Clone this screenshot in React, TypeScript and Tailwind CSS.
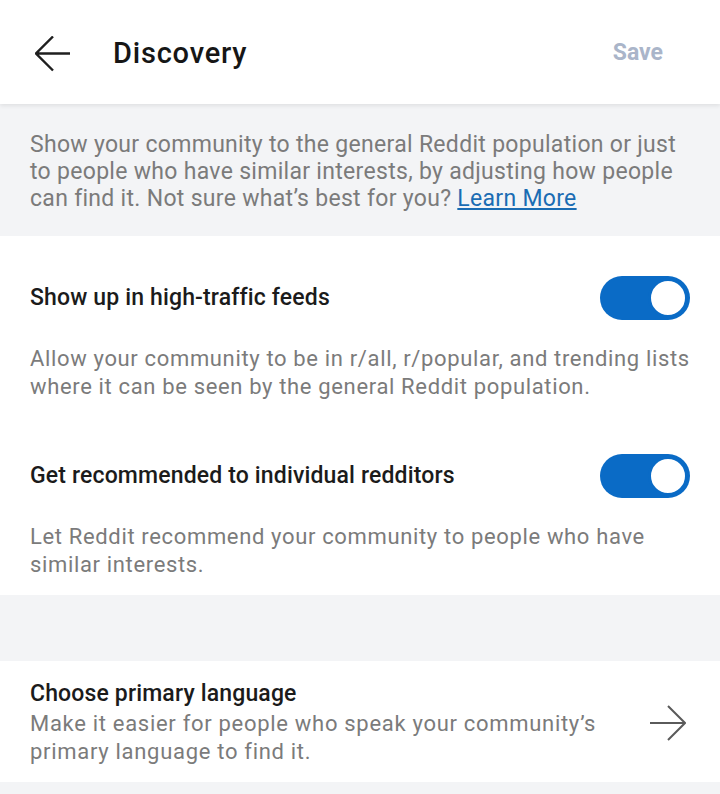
import React from 'react';

const FONT = { fontFamily: 'Roboto, "Noto Sans", sans-serif' };

function Toggle({ on }: { on: boolean }) {
  return (
    <div
      className={`flex h-[44px] w-[90px] shrink-0 items-center rounded-full p-[2px] ${
        on ? 'justify-end bg-[#0a6bc6]' : 'justify-start bg-gray-300'
      }`}
    >
      <div className="h-[40px] w-[40px] rounded-full border-[3px] border-[#0a6bc6] bg-white" />
    </div>
  );
}

const SETTINGS = [
  {
    id: 'feeds',
    title: 'Show up in high-traffic feeds',
    body: 'Allow your community to be in r/all, r/popular, and trending lists where it can be seen by the general Reddit population.',
  },
  {
    id: 'recommended',
    title: 'Get recommended to individual redditors',
    body: 'Let Reddit recommend your community to people who have similar interests.',
  },
];

export default function App() {
  const [enabled, setEnabled] = React.useState<Record<string, boolean>>({ feeds: true, recommended: true });

  return (
    <div className="min-h-screen w-[720px] bg-[#f3f4f6]" style={FONT}>
      <header className="relative z-10 flex h-[104px] items-center bg-white pl-[35px] pr-[57px] pt-[3px] shadow-[0_2px_4px_rgba(0,0,0,0.08)]">
        <svg width="36" height="36" viewBox="0 0 36 36" fill="none" className="shrink-0">
          <path d="M1 17.5H35M18 0.5L1 17.5L18 34.5" stroke="#1f1f1f" strokeWidth="2.4" />
        </svg>
        <h1 className="ml-[42px] text-[29px] font-medium leading-none tracking-[0.8px] text-[#161616]">Discovery</h1>
        <button className="ml-auto text-[23px] font-bold text-[#aab5c9]">Save</button>
      </header>

      <section className="px-[30px] pb-[24px] pt-[27px] text-[23px] leading-[27px] tracking-[0.3px] text-[#7b7b7b]">
        Show your community to the general Reddit population or just to people who have similar interests, by
        adjusting how people can find it. Not sure what’s best for you?{' '}
        <span className="text-[#1a6cb3] underline underline-offset-2">Learn More</span>
      </section>

      <div className="bg-white">
        {SETTINGS.map((s) => (
          <div key={s.id} className="px-[30px] pb-[13px] pt-[40px]">
            <div className="flex items-center justify-between">
              <div className="text-[23px] font-medium tracking-[0.15px] text-[#1b1b1b]">{s.title}</div>
              <button onClick={() => setEnabled((e) => ({ ...e, [s.id]: !e[s.id] }))}>
                <Toggle on={enabled[s.id]} />
              </button>
            </div>
            <p className="mt-[25px] text-[22px] leading-[28px] tracking-[0.65px] text-[#7b7b7b]">{s.body}</p>
          </div>
        ))}
        <div className="h-[3px]" />
      </div>

      <div className="h-[66px]" />

      <div className="flex items-center bg-white pb-[16px] pl-[30px] pr-[34px] pt-[19px]">
        <div className="min-w-0 flex-1 pr-[40px]">
          <div className="text-[23px] font-medium leading-[28px] tracking-[0.15px] text-[#1b1b1b]">
            Choose primary language
          </div>
          <p className="mt-[2px] text-[22px] leading-[28px] tracking-[0.7px] text-[#7b7b7b]">
            Make it easier for people who speak your community’s primary language to find it.
          </p>
        </div>
        <svg width="36" height="36" viewBox="0 0 36 36" fill="none" className="shrink-0">
          <path d="M0 18H35M18 1L35 18L18 35" stroke="#5a5a5a" strokeWidth="2" />
        </svg>
      </div>
    </div>
  );
}
